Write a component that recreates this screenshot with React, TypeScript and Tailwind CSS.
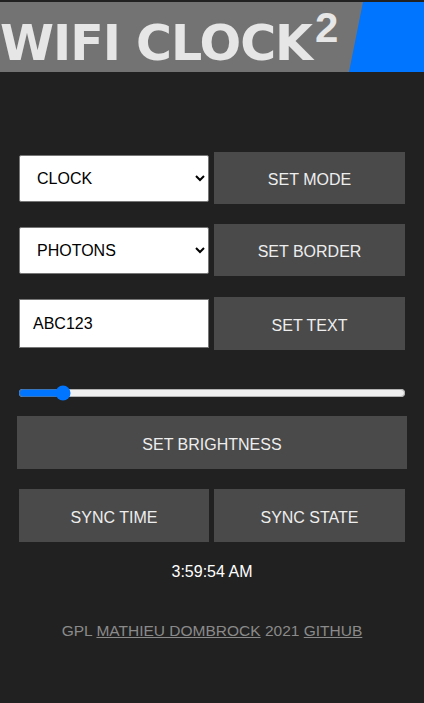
import { useState } from "react";

const btn =
  "bg-[#4a4a4a] text-[#eeeeee] text-[16px] uppercase flex items-center justify-center pt-[4px]";

export default function App() {
  const [mode, setMode] = useState("CLOCK");
  const [border, setBorder] = useState("PHOTONS");
  const [text, setText] = useState("ABC123");
  const [brightness, setBrightness] = useState(10);

  return (
    <div className="min-h-[703px] bg-[#212121] pt-[2px] font-['Liberation_Sans',Arial,sans-serif]">
      <header className="relative h-[70px] overflow-hidden bg-[#737373]">
        <div
          className="absolute inset-y-0 right-0 w-[75px] bg-[#0075ff]"
          style={{ clipPath: "polygon(14px 0, 100% 0, 100% 100%, 0 100%)" }}
        />
        <h1 className="relative flex h-full items-start text-[#e6e6e6]">
          <span className="mt-[17px] whitespace-nowrap font-['DejaVu_Sans',Verdana,sans-serif] text-[49px] font-bold leading-none tracking-[-1px]">
            WIFI CLOCK
          </span>
          <span className="ml-[3px] mt-[5px] font-['Liberation_Sans',Arial,sans-serif] text-[42px] font-bold leading-none">
            2
          </span>
        </h1>
      </header>

      <main className="mx-auto mt-[80px] flex w-[390px] flex-col">
        <div className="flex items-center gap-[5px] pl-[2px]">
          <select
            value={mode}
            onChange={(e) => setMode(e.target.value)}
            className="h-[47px] w-[190px] rounded-[2px] border border-[#767676] bg-white pl-[13px] pr-1 text-[16px] text-black"
          >
            <option>CLOCK</option>
            <option>TEXT</option>
            <option>OFF</option>
          </select>
          <button className={`${btn} h-[52px] w-[191px]`}>SET MODE</button>
        </div>

        <div className="mt-[20px] flex items-center gap-[5px] pl-[2px]">
          <select
            value={border}
            onChange={(e) => setBorder(e.target.value)}
            className="h-[47px] w-[190px] rounded-[2px] border border-[#767676] bg-white pl-[13px] pr-1 text-[16px] text-black"
          >
            <option>PHOTONS</option>
            <option>RAINBOW</option>
            <option>NONE</option>
          </select>
          <button className={`${btn} h-[52px] w-[191px]`}>SET BORDER</button>
        </div>

        <div className="mt-[21px] flex items-center gap-[5px] pl-[2px]">
          <input
            value={text}
            onChange={(e) => setText(e.target.value)}
            className="h-[49px] w-[190px] border border-[#767676] bg-white pl-[13px] text-[16px] text-black outline-none"
          />
          <button className={`${btn} h-[53px] w-[191px]`}>SET TEXT</button>
        </div>

        <input
          type="range"
          min={0}
          max={100}
          value={brightness}
          onChange={(e) => setBrightness(Number(e.target.value))}
          className="mt-[35px] ml-[1px] w-[388px] accent-[#0075ff]"
        />

        <button className={`${btn} mt-[15px] h-[53px] w-[390px]`}>SET BRIGHTNESS</button>

        <div className="mt-[20px] flex gap-[5px] pl-[2px]">
          <button className={`${btn} h-[53px] w-[190px]`}>SYNC TIME</button>
          <button className={`${btn} h-[53px] w-[191px]`}>SYNC STATE</button>
        </div>

        <p className="mt-[18px] text-center text-[16px] text-white">3:59:54 AM</p>

        <footer className="mt-[35px] text-center text-[15.5px] text-[#8a8a8a]">
          GPL{" "}
          <a href="#" className="underline">
            MATHIEU DOMBROCK
          </a>{" "}
          2021{" "}
          <a href="#" className="underline">
            GITHUB
          </a>
        </footer>
      </main>
    </div>
  );
}
